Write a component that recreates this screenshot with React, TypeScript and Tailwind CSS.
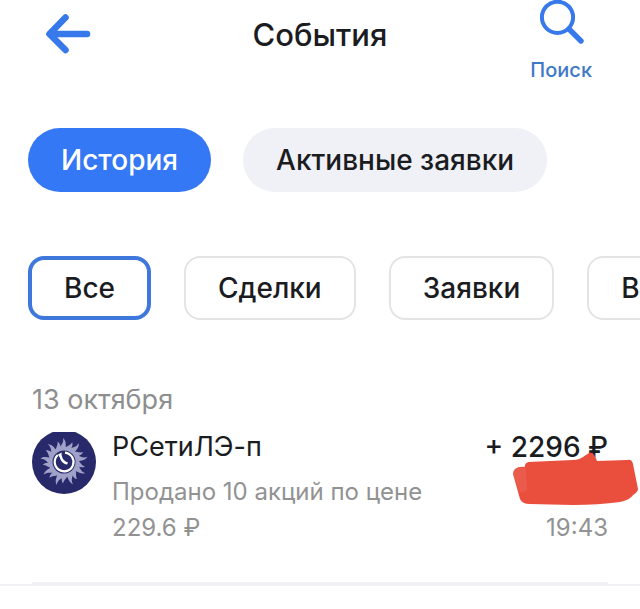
const rays = Array.from({ length: 18 }, (_, i) => i * 20);

function BackIcon() {
  return (
    <svg width="48" height="44" viewBox="0 0 48 44" fill="none" stroke="#3779ea" strokeWidth="6.6" strokeLinecap="round" strokeLinejoin="round" aria-hidden="true">
      <path d="M21.500 5.500 5.500 22 21.500 38M6 22h37" />
    </svg>
  );
}

function SearchIcon() {
  return (
    <svg width="48" height="46" viewBox="0 0 48 46" fill="none" stroke="#3779ea" strokeLinecap="round" aria-hidden="true">
      <circle cx="20.500" cy="17.300" r="15.600" strokeWidth="4" />
      <path d="M32 29 44 41" strokeWidth="5.400" />
    </svg>
  );
}

function CompanyLogo() {
  return (
    <svg className="shrink-0" width="64" height="62" viewBox="0 2 64 62" role="img" aria-label="РСетиЛЭ-п">
      <circle cx="32" cy="32" r="32" fill="#27296a" />
      <circle cx="32" cy="32" r="14" fill="#9fa1c8" />
      <g fill="#9fa1c8">
        {rays.map((angle, i) => (
          <path
            key={angle}
            transform={`rotate(${angle} 32 32)`}
            d={i % 2 === 0 ? "M28 20C27 15.500 32.500 14 31 8C35.500 12 32.500 16 35 20Z" : "M28 20C28 16 32 15 33 10.500C35.500 14 33 17 35.500 20Z"}
          />
        ))}
      </g>
      <circle cx="32" cy="32" r="11.500" fill="#27296a" />
      <path d="M33 22.600A9.400 9.400 0 1 1 25.800 25" fill="none" stroke="#fff" strokeWidth="2.200" />
      <path d="M26 24.500L29.600 22.500C29.300 27 31 30.500 36 32.500L35 34.500C31 34 29 31.500 27.800 27.500Z" fill="#fff" />
    </svg>
  );
}

function RedactionMark() {
  return (
    <svg className="absolute top-5 -right-8 h-14 w-32" viewBox="0 0 128 56" fill="#ea4e3d" aria-hidden="true">
      <path d="M3 17Q7 14 13 15Q12 12 16 10L61 8Q67 8 71 5L77 1Q80-1 83 4L85 9L115 8Q120 7 121 12L126 37Q126 40 121 43Q118 48 108 50Q86 53 61 53L18 52Q10 52 8 47L1 22Q1 19 3 17Z" />
      <path d="M3 17Q7 14 14 16L15 38Q9 42 7 39L1 22Q1 19 3 17Z" fill="#ef7566" opacity=".35" />
    </svg>
  );
}

export default function App() {
  return (
    <main className="min-h-screen overflow-hidden bg-white font-['Inter','Noto_Sans',sans-serif] text-[#1b1c1f]">
      <header className="grid grid-cols-[1fr_auto_1fr] items-start px-12">
        <button type="button" aria-label="Назад" className="mt-3 -ml-1 justify-self-start">
          <BackIcon />
        </button>
        <h1 className="pt-4 text-[31px] leading-[38px] font-medium">События</h1>
        <button type="button" className="flex flex-col items-center justify-self-end text-[20px] leading-6 font-medium text-[#4078c8]">
          <SearchIcon />
          <span className="mt-3 block">Поиск</span>
        </button>
      </header>

      <nav aria-label="Разделы" className="mt-[46px] flex gap-8 px-7 text-[28px] leading-8 font-medium">
        <button type="button" aria-current="page" className="h-16 shrink-0 rounded-full bg-[#3478f6] px-[33px] text-white">История</button>
        <button type="button" className="h-16 shrink-0 rounded-full bg-[#f0f1f6] px-[33px]">Активные заявки</button>
      </nav>

      <div role="group" aria-label="Фильтр" className="mt-16 flex gap-[33px] overflow-hidden pl-7 text-[28px] leading-8 font-medium">
        <button type="button" aria-pressed="true" className="h-16 shrink-0 rounded-2xl border-4 border-[#3f78dc] px-8">Все</button>
        <button type="button" className="h-16 shrink-0 rounded-2xl border-2 border-[#e4e4e5] px-8">Сделки</button>
        <button type="button" className="h-16 shrink-0 rounded-2xl border-2 border-[#e4e4e5] px-8">Заявки</button>
        <button type="button" className="h-16 w-32 shrink-0 rounded-2xl border-2 border-[#e4e4e5] px-8 text-left">В</button>
      </div>

      <section className="mt-16 px-8">
        <h2 className="text-[27px] leading-8 text-[#8e8e8f]">13 октября</h2>
        <article className="mt-4 flex gap-4 pb-9">
          <CompanyLogo />
          <div className="min-w-0 flex-1">
            <h3 className="text-[27px] leading-[30px]">РСетиЛЭ-п</h3>
            <p className="mt-3 text-[24px] leading-9 text-[#929293]">
              Продано 10 акций по цене
              <br />
              229.6 ₽
            </p>
          </div>
          <div className="relative flex flex-col items-end justify-between">
            <p className="text-[28px] leading-[30px] font-medium">+ 2296 ₽</p>
            <RedactionMark />
            <time className="text-[24px] leading-9 text-[#929293]">19:43</time>
          </div>
        </article>
        <div className="h-0.5 bg-[#f0f1f4]" />
      </section>
      <hr className="h-0.5 border-0 bg-[#f0f1f4]" />
    </main>
  );
}
